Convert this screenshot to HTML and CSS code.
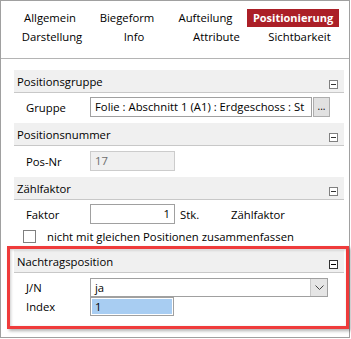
FILE: index.html
```html
<!DOCTYPE html>
<html>
<head>
<meta charset="utf-8">
<link rel="stylesheet" href="styles.css">
</head>
<body>
<div class="frame">
  <div class="tabs">
    <div class="tabrow row1">
      <div class="tab w80">Allgemein</div>
      <div class="tab w74">Biegeform</div>
      <div class="tab w83">Aufteilung</div>
      <div class="tab w92 active">Positionierung</div>
    </div>
    <div class="tabrow row2">
      <div class="tab w82">Darstellung</div>
      <div class="tab w82">Info</div>
      <div class="tab w83">Attribute</div>
      <div class="tab w83">Sichtbarkeit</div>
    </div>
  </div>
  <div class="content">
    <section class="group">
      <div class="ghead"><span>Positionsgruppe</span><i class="collapse"></i></div>
      <div class="gbody b1">
        <div class="row">
          <span class="lbl">Gruppe</span>
          <div class="field wide"><span class="val">Folie : Abschnitt 1 (A1) : Erdgeschoss : St</span></div>
          <div class="btn">...</div>
        </div>
      </div>
    </section>
    <section class="group">
      <div class="ghead"><span>Positionsnummer</span><i class="collapse"></i></div>
      <div class="gbody b2">
        <div class="row">
          <span class="lbl">Pos-Nr</span>
          <div class="field short disabled">17</div>
        </div>
      </div>
    </section>
    <section class="group">
      <div class="ghead"><span>Zählfaktor</span><i class="collapse"></i></div>
      <div class="gbody b3">
        <div class="row">
          <span class="lbl">Faktor</span>
          <div class="field short num">1</div>
          <span class="unit">Stk.</span>
          <span>Zählfaktor</span>
        </div>
        <div class="checkrow">
          <span class="checkbox"></span>
          <span>nicht mit gleichen Positionen zusammenfassen</span>
        </div>
      </div>
    </section>
    <section class="group">
      <div class="ghead"><span>Nachtragsposition</span><i class="collapse dark"></i></div>
      <div class="gbody b4">
        <div class="row tight">
          <span class="lbl">J/N</span>
          <div class="select">
            <span class="selval">ja</span>
            <span class="drop"><svg width="9" height="5" viewBox="0 0 9 5"><path d="M0.5 0.5 L4.5 4.5 L8.5 0.5" fill="none" stroke="#444" stroke-width="1"/></svg></span>
          </div>
        </div>
        <div class="row tight">
          <span class="lbl">Index</span>
          <div class="field idx"><span class="sel">1</span></div>
        </div>
      </div>
    </section>
  </div>
</div>
<div class="highlight"></div>
</body>
</html>
```
FILE: styles.css
```css
* { box-sizing: border-box; margin: 0; padding: 0; }
html, body { width: 351px; height: 339px; overflow: hidden; background: #fff; }
body {
  font-family: "Open Sans", "Noto Sans", sans-serif;
  font-size: 11.3px;
  color: #000;
  position: relative;
}
.frame {
  width: 350px;
  height: 338px;
  border: 1px solid #a0a0a0;
}
.tabs {
  padding: 8px 0 11px;
  border-bottom: 1px solid #b4b4b4;
}
.tabrow { display: flex; }
.row1 { padding-left: 9px; }
.row2 { padding-left: 10px; }
.tab { text-align: center; white-space: nowrap; }
.row1 .tab { height: 18px; line-height: 18px; }
.row2 .tab { height: 20px; line-height: 20px; }
.w74 { width: 74px; }
.w80 { width: 80px; }
.w82 { width: 82px; }
.w83 { width: 83px; }
.w92 { width: 92px; }
.active { background: #ab1f27; color: #fff; font-weight: 700; font-size: 11px; }

.content { padding: 11px 5px 0 13px; }
.ghead {
  height: 23px;
  background: #f0f0f0;
  border-bottom: 1px solid #c8c8c8;
  display: flex;
  align-items: center;
  padding-left: 3px;
}
.collapse {
  margin-left: auto;
  margin-right: 6px;
  align-self: flex-end;
  margin-bottom: 3px;
  width: 9px;
  height: 9px;
  border: 1px solid #808080;
  background: #fff;
  position: relative;
}
.collapse::after {
  content: "";
  position: absolute;
  left: 1px;
  right: 1px;
  top: 3px;
  height: 1px;
  background: #333;
}
.collapse.dark { border-color: #333; }
.collapse.dark::after { background: #000; }

.b1 { padding: 4px 0 6px; }
.b2 { padding: 5px 0 6px; }
.b3 { padding: 4px 0 5px; }
.b4 { padding: 5px 0 0; }

.row { display: flex; align-items: center; height: 20px; padding-left: 12px; }
.row.tight { height: 19px; }
.lbl { width: 64px; }
.field {
  height: 20px;
  border: 1px solid #a0a0a0;
  background: #fff;
  padding-left: 4px;
  line-height: 18px;
  overflow: hidden;
  white-space: nowrap;
}
.wide { width: 222px; }
.short { width: 85px; }
.disabled { background: #f0f0f0; border-color: #cccccc; color: #6d6d6d; }
.num { text-align: right; padding-right: 4px; }
.btn {
  margin-left: 1px;
  width: 17px;
  height: 20px;
  background: #e1e1e1;
  border: 1px solid #adadad;
  text-align: center;
  line-height: 16px;
  font-size: 10px;
}
.unit { margin-left: 5px; width: 51px; }
.checkrow {
  display: flex;
  align-items: center;
  height: 18px;
  margin-top: 3px;
  padding-left: 9px;
}
.checkbox {
  width: 13px;
  height: 13px;
  border: 1px solid #808080;
  background: #fff;
  margin-right: 11px;
}
.select {
  width: 238px;
  height: 19px;
  border: 1px solid #a0a0a0;
  display: flex;
  align-items: center;
  background: #fff;
}
.selval { flex: 1; padding-left: 4px; }
.drop {
  width: 17px;
  height: 17px;
  background: #e5e5e5;
  border-left: 1px solid #c8c8c8;
  display: flex;
  align-items: center;
  justify-content: center;
}
.drop svg { display: block; }
.field.idx {
  width: 84px;
  height: 19px;
  padding: 1px;
  line-height: 15px;
}
.sel {
  display: block;
  height: 15px;
  background: #a8cdf2;
  padding-left: 3px;
}
.highlight {
  position: absolute;
  left: 7px;
  top: 246px;
  width: 342px;
  height: 83px;
  border: 3px solid #ef3b3b;
  box-shadow: 2px 2px 3px rgba(0,0,0,0.3), inset 1px 1px 3px rgba(0,0,0,0.2);
}
```
